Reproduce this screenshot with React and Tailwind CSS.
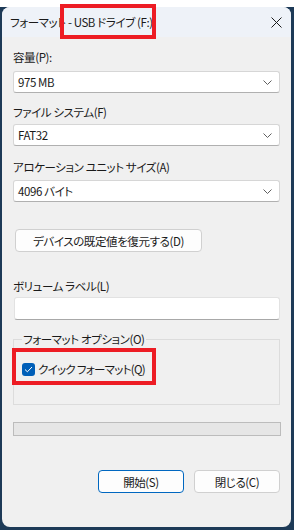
import React from 'react';

const Chevron = () => (
  <svg width="9" height="5" viewBox="0 0 9 5" className="shrink-0">
    <path d="M0.5 0.5 L4.5 4.5 L8.5 0.5" fill="none" stroke="#5f5f5f" strokeWidth="1" />
  </svg>
);

function Select({ value }) {
  return (
    <div className="flex h-[22px] items-center justify-between rounded-[3px] border border-[#d6d6d6] border-b-[#b0b0b0] bg-white pl-[4px] pr-[7px]">
      <span>{value}</span>
      <Chevron />
    </div>
  );
}

function Button({ children, primary, className = '' }) {
  return (
    <div
      className={`flex h-[23px] items-center justify-center rounded-[4px] border bg-[#fdfdfd] ${
        primary ? 'border-[#0067c0]' : 'border-[#d0d0d0]'
      } ${className}`}
    >
      {children}
    </div>
  );
}

export default function App() {
  return (
    <div className="relative h-[530px] w-[294px] bg-white pt-[7px] text-[11.5px] leading-[16px] tracking-[-0.4px] text-[#1a1a1a] font-['Noto_Sans_CJK_JP',sans-serif] [font-feature-settings:'palt']">
      {/* desktop behind the dialog */}
      <div className="h-[523px] bg-[#1d3a57] pb-[3px] pl-[2px] pr-[3px]">
        <div className="flex h-full flex-col overflow-hidden rounded-lg bg-[#f0f0f0]">
          {/* title bar */}
          <div className="flex h-[30px] shrink-0 items-center justify-between bg-[#eef2f8] pl-[8px] pr-[8px]">
            <span>フォーマット - USB ドライブ (F:)</span>
            <svg width="11" height="11" viewBox="0 0 11 11" className="mr-[1px]">
              <path d="M0.5 0.5 L10.5 10.5 M10.5 0.5 L0.5 10.5" stroke="#1a1a1a" strokeWidth="1" />
            </svg>
          </div>

          <div className="flex flex-col px-[11px]">
            <div className="mt-[12px]">容量(P):</div>
            <div className="mt-[6px]">
              <Select value="975 MB" />
            </div>

            <div className="mt-[11px]">ファイル システム(F)</div>
            <div className="mt-[4px]">
              <Select value="FAT32" />
            </div>

            <div className="mt-[13px]">アロケーション ユニット サイズ(A)</div>
            <div className="mt-[5px]">
              <Select value="4096 バイト" />
            </div>

            <Button className="ml-[2px] mt-[27px] w-[187px]">デバイスの既定値を復元する(D)</Button>

            <div className="mt-[26px]">ボリューム ラベル(L)</div>
            <div className="ml-[1px] mt-[3px] h-[23px] rounded-[3px] border border-[#e2e2e2] border-b-[#a8a8a8] bg-white" />

            {/* format options group */}
            <div className="relative mt-[19px] h-[66px] border border-[#dcdcdc]">
              <span className="absolute left-[8px] top-[-9px] bg-[#f0f0f0] px-[1px]">フォーマット オプション(O)</span>
              <div className="ml-[8px] mt-[21px] flex items-center gap-[3px]">
                <div className="flex h-[13px] w-[13px] items-center justify-center rounded-[3px] bg-[#005fb8]">
                  <svg width="9" height="7" viewBox="0 0 9 7">
                    <path d="M1 3.5 L3.4 5.8 L8 1" fill="none" stroke="white" strokeWidth="1" />
                  </svg>
                </div>
                <span className="tracking-[-0.7px]">クイック フォーマット(Q)</span>
              </div>
            </div>

            {/* progress bar */}
            <div className="mt-[17px] h-[14px] w-[268px] border border-[#bcbcbc] bg-[#e6e6e6]" />

            <div className="mt-[34px] flex justify-end gap-[10px]">
              <Button primary className="w-[86px]">開始(S)</Button>
              <Button className="w-[86px]">閉じる(C)</Button>
            </div>
          </div>
        </div>
      </div>

      {/* annotation boxes */}
      <div className="absolute left-[60px] top-[4px] h-[35px] w-[96px] border-[4px] border-[#ed1c24]" />
      <div className="absolute left-[12px] top-[348px] h-[37px] w-[144px] border-[4px] border-[#ed1c24]" />
    </div>
  );
}
